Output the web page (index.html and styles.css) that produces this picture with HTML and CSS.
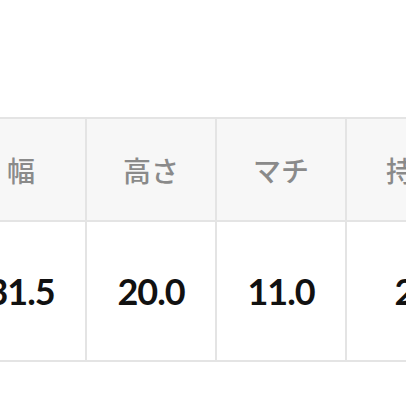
FILE: index.html
```html
<!DOCTYPE html>
<html lang="ja">
<head>
<meta charset="utf-8">
<link rel="stylesheet" href="styles.css">
</head>
<body>
<div class="wrap">
<table class="size-table">
<colgroup>
<col class="c">
<col class="c">
<col class="c">
<col class="c-wide">
</colgroup>
<thead>
<tr><th>幅</th><th>高さ</th><th>マチ</th><th>持ち手</th></tr>
</thead>
<tbody>
<tr><td>31.5</td><td>20.0</td><td>11.0</td><td>24.0</td></tr>
</tbody>
</table>
</div>
</body>
</html>
```

FILE: styles.css
```css
html, body {
  margin: 0;
  padding: 0;
  background: #ffffff;
  width: 406px;
  height: 406px;
  overflow: hidden;
}
.wrap {
  padding-top: 117px;
  margin-left: -45px;
  width: 800px;
}
.size-table {
  border-collapse: collapse;
  table-layout: fixed;
  width: 554px;
}
.size-table .c { width: 130px; }
.size-table .c-wide { width: 164px; }
.size-table th,
.size-table td {
  border: 2px solid #e4e4e4;
  text-align: center;
  vertical-align: middle;
  padding: 0;
}
.size-table th {
  background: #f7f7f7;
  height: 101px;
  color: #8a8a8a;
  font-family: "Noto Sans CJK JP", "Noto Sans", sans-serif;
  font-weight: 500;
  font-size: 28px;
}
.size-table td {
  background: #ffffff;
  height: 138px;
  color: #111111;
  font-family: Lato, "Liberation Sans", sans-serif;
  font-weight: 700;
  font-size: 36px;
  letter-spacing: -1px;
}
```
